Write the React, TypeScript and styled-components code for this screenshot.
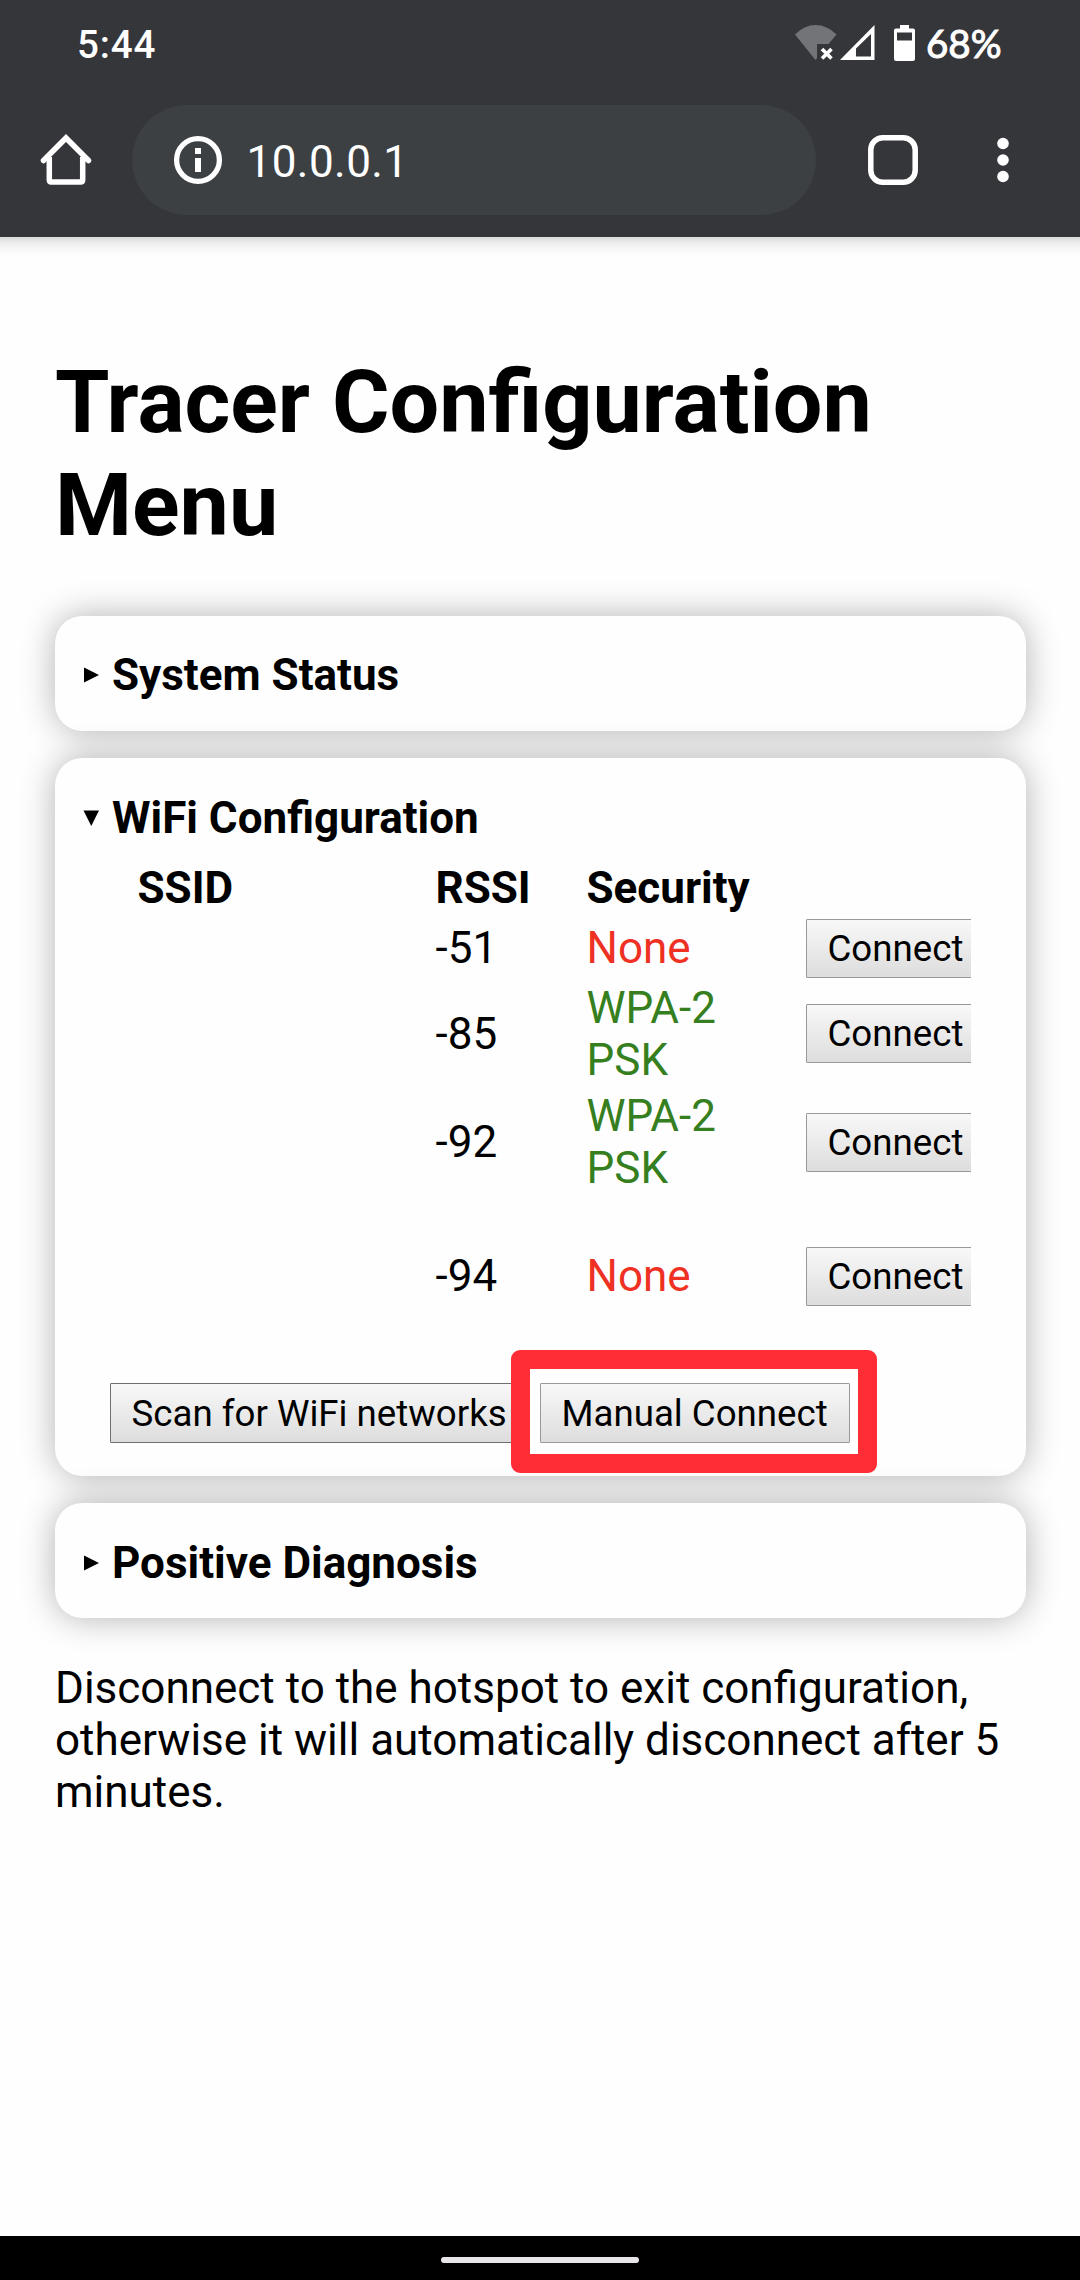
import React from "react";
import styled, { createGlobalStyle } from "styled-components";

const GlobalStyle = createGlobalStyle`
  * { box-sizing: border-box; }
  html, body { margin: 0; padding: 0; background: #fefefe; }
  body { font-family: Roboto, "Noto Sans", sans-serif; font-size: 44px; line-height: 52px; color: #000; }
`;

const Screen = styled.div`
  width: 1080px;
  height: 2280px;
  display: flex;
  flex-direction: column;
  overflow: hidden;
  background: #fefefe;
`;

const BrowserChrome = styled.header`
  flex: none;
  height: 237px;
  background: #35363a;
  color: #fff;
`;

const StatusBar = styled.div`
  height: 88px;
  padding: 1px 76px 0 77px;
  display: flex;
  align-items: center;
  justify-content: space-between;
  font-size: 38.5px;
  font-weight: 500;
`;

const StatusIcons = styled.div`
  display: flex;
  align-items: center;
  padding-bottom: 3px;
`;

const Clock = styled.span`
  letter-spacing: 0.9px;
`;

const BatteryLevel = styled.span`
  width: 78px;
  margin-left: 11px;
  font-family: Lato, Roboto, sans-serif;
  font-size: 38.5px;
  font-weight: 400;
  white-space: nowrap;
  -webkit-text-stroke: 1px #fff;
`;

const Glyph = styled.svg<{ $gap?: number }>`
  display: block;
  flex: none;
  margin-left: ${(p) => p.$gap ?? 0}px;
`;

const Toolbar = styled.div`
  display: flex;
  align-items: center;
  height: 110px;
  margin-top: 17px;
  padding-left: 36px;
`;

const AddressPill = styled.div`
  width: 684px;
  height: 110px;
  margin-left: 36px;
  margin-right: 47px;
  padding: 0 38px;
  display: flex;
  align-items: center;
  gap: 20.5px;
  border-radius: 55px;
  background: #3c4043;
  font-size: 44px;
`;

const AddressText = styled.span`
  padding-top: 4px;
  letter-spacing: 0.45px;
`;

const ChromeShadow = styled.div`
  flex: none;
  height: 20px;
  background: linear-gradient(#d9dbdb, #f0f0f0 35%, #fafafa 70%, #fefefe);
`;

const Page = styled.main`
  flex: 1;
  padding: 93px 54px 0 55px;
`;

const Title = styled.h1`
  margin: 0 0 60px;
  font-size: 88px;
  line-height: 103px;
  font-weight: 700;
`;

const Card = styled.section<{ $height: number; $top?: number }>`
  height: ${(p) => p.$height}px;
  margin-bottom: 27px;
  padding: ${(p) => p.$top ?? 33}px 0 0 27px;
  border-radius: 27.5px;
  background: #fefefe;
  box-shadow: 0 0 34px rgba(0, 0, 0, 0.3);
`;

const Summary = styled.h2`
  display: flex;
  align-items: center;
  gap: 12px;
  margin: 0;
  font-size: 44px;
  line-height: 52px;
  font-weight: 700;
`;

const NetworkTable = styled.div`
  width: 861px;
  margin: 15px 0 0 28px;
  overflow: hidden;
`;

const NetworkRow = styled.div<{ $height: number }>`
  display: grid;
  grid-template-columns: 298px 151px 219.5px 220px;
  align-items: center;
  height: ${(p) => p.$height}px;
  padding-left: 27.5px;
`;

const HeadCell = styled.span`
  font-weight: 700;
`;

const SecurityCell = styled.span<{ $open: boolean }>`
  width: 170px;
  color: ${(p) => (p.$open ? "#ee3123" : "#357f20")};
`;

const Button = styled.button<{ $width: number; $height?: number; $edge?: string }>`
  display: flex;
  align-items: center;
  flex: none;
  width: ${(p) => p.$width}px;
  height: ${(p) => p.$height ?? 59}px;
  padding: 0 0 0 20.5px;
  border: 1px solid ${(p) => p.$edge ?? "#999"};
  border-radius: 1px;
  background: linear-gradient(#f8f8f8, #dddddd);
  color: #000;
  font-family: Roboto, sans-serif;
  font-size: 36.67px;
  line-height: 43px;
  white-space: nowrap;
`;

const Actions = styled.div`
  display: flex;
  gap: 12px;
  margin: 27px 0 0 28px;
`;

const Highlighted = styled.div`
  position: relative;
`;

const HighlightFrame = styled.div`
  position: absolute;
  left: -28.6px;
  top: -33px;
  width: 366px;
  height: 123px;
  border: 19px solid #ff2d36;
  border-radius: 9px;
`;

const Note = styled.p`
  margin: 44px 0 0;
`;

const NavigationBar = styled.footer`
  flex: none;
  height: 44px;
  display: flex;
  align-items: center;
  justify-content: center;
  padding-top: 4px;
  background: #000;
`;

const NavigationHandle = styled.div`
  width: 198px;
  height: 6px;
  border-radius: 3px;
  background: #e8e6e9;
`;

const networks = [
  { rssi: "-51", security: "None", height: 63 },
  { rssi: "-85", security: "WPA-2 PSK", height: 108.5 },
  { rssi: "-92", security: "WPA-2 PSK", height: 108.5 },
  { rssi: "-94", security: "None", height: 159.5 },
];

const WifiOffIcon = () => (
  <Glyph width="42" height="36" viewBox="0 0 42 36">
    <path d="M0 9.500Q9 0 20.500 0T41.500 9.500L33.500 19H22V33L20.500 35Z" fill="#737478" />
    <path d="M27 24L36.500 33.500M36.500 24L27 33.500" stroke="#fff" strokeWidth="3.600" />
  </Glyph>
);

const SignalIcon = () => (
  <Glyph $gap={3} width="35" height="36" viewBox="0 0 35 36">
    <path fillRule="evenodd" d="M0 35L34.500 0V35ZM16 23.500V31.500H31V9Z" fill="#fff" />
  </Glyph>
);

const BatteryIcon = () => (
  <Glyph $gap={19} width="21" height="36" viewBox="0 0 21 36">
    <path
      fillRule="evenodd"
      d="M6 0H15V3.500H19A2 2 0 0 1 21 5.500V34A2 2 0 0 1 19 36H2A2 2 0 0 1 0 34V5.500A2 2 0 0 1 2 3.500H6ZM3 7.500V15.500H18V7.500Z"
      fill="#fff"
    />
  </Glyph>
);

const HomeIcon = () => (
  <Glyph width="60" height="60" viewBox="0 0 60 60" fill="none" stroke="#fff" strokeWidth="5.500">
    <path d="M7.500 30.500L30 8L52.500 30.500" strokeLinecap="round" />
    <path d="M13.300 27V50Q13.300 52 15.300 52H44.700Q46.700 52 46.700 50V27" />
  </Glyph>
);

const InfoIcon = () => (
  <Glyph width="56" height="56" viewBox="0 0 56 56">
    <circle cx="28" cy="28" r="21.400" fill="none" stroke="#fff" strokeWidth="5.300" />
    <path d="M25 16H31V22H25ZM25 26H31V40H25Z" fill="#fff" />
  </Glyph>
);

const TabsIcon = () => (
  <Glyph width="60" height="60" viewBox="0 0 60 60">
    <rect x="7.800" y="7.800" width="44.400" height="44.400" rx="12" fill="none" stroke="#fff" strokeWidth="5.500" />
  </Glyph>
);

const MoreIcon = () => (
  <Glyph $gap={70} width="20" height="60" viewBox="0 0 20 60" fill="#fff">
    <circle cx="10" cy="13.500" r="5.800" />
    <circle cx="10" cy="30" r="5.800" />
    <circle cx="10" cy="46.500" r="5.800" />
  </Glyph>
);

const Marker = ({ open = false }: { open?: boolean }) => (
  <Glyph width="18" height="18" viewBox="0 0 18 18">
    <path d={open ? "M1.500 1.500H17L9.250 17Z" : "M2 1.500L17 9L2 16.500Z"} fill="#000" />
  </Glyph>
);

export default function App() {
  return (
    <Screen>
      <GlobalStyle />
      <BrowserChrome>
        <StatusBar>
          <Clock>5:44</Clock>
          <StatusIcons>
            <WifiOffIcon />
            <SignalIcon />
            <BatteryIcon />
            <BatteryLevel>68%</BatteryLevel>
          </StatusIcons>
        </StatusBar>
        <Toolbar>
          <HomeIcon />
          <AddressPill>
            <InfoIcon />
            <AddressText>10.0.0.1</AddressText>
          </AddressPill>
          <TabsIcon />
          <MoreIcon />
        </Toolbar>
      </BrowserChrome>
      <ChromeShadow />
      <Page>
        <Title>Tracer Configuration Menu</Title>
        <Card $height={115}>
          <Summary>
            <Marker />
            System Status
          </Summary>
        </Card>
        <Card $height={718} $top={34}>
          <Summary>
            <Marker open />
            WiFi Configuration
          </Summary>
          <NetworkTable>
            <NetworkRow $height={57.5}>
              <HeadCell>SSID</HeadCell>
              <HeadCell>RSSI</HeadCell>
              <HeadCell>Security</HeadCell>
            </NetworkRow>
            {networks.map((n) => (
              <NetworkRow key={n.rssi} $height={n.height}>
                <span />
                <span>{n.rssi}</span>
                <SecurityCell $open={n.security === "None"}>{n.security}</SecurityCell>
                <Button $width={178}>Connect</Button>
              </NetworkRow>
            ))}
          </NetworkTable>
          <Actions>
            <Button $width={418} $height={60} $edge="#707070">
              Scan for WiFi networks
            </Button>
            <Highlighted>
              <Button $width={310} $height={60}>
                Manual Connect
              </Button>
              <HighlightFrame />
            </Highlighted>
          </Actions>
        </Card>
        <Card $height={115} $top={34}>
          <Summary>
            <Marker />
            Positive Diagnosis
          </Summary>
        </Card>
        <Note>Disconnect to the hotspot to exit configuration, otherwise it will automatically disconnect after 5 minutes.</Note>
      </Page>
      <NavigationBar>
        <NavigationHandle />
      </NavigationBar>
    </Screen>
  );
}
